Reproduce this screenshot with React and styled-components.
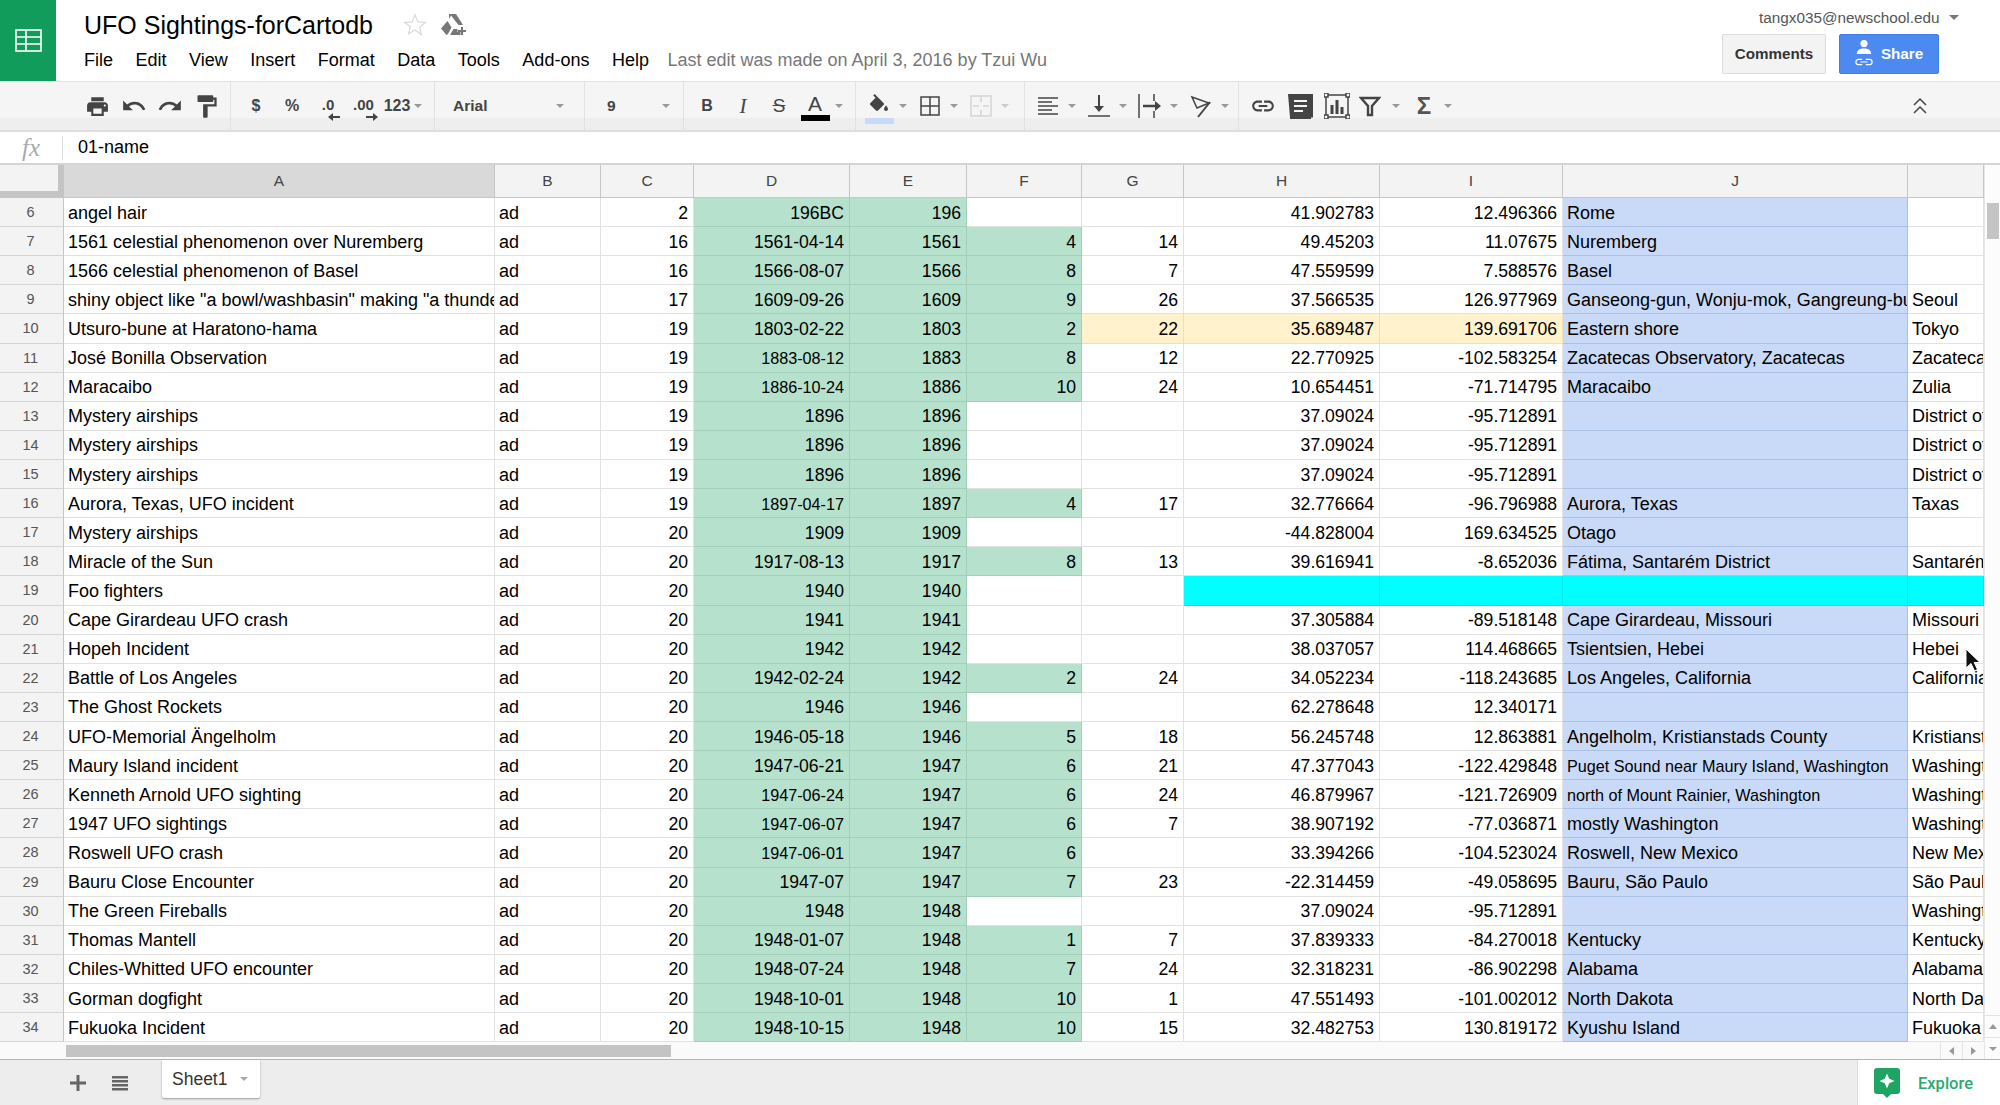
import React from 'react'
import styled, { createGlobalStyle } from 'styled-components'

const GlobalStyle = createGlobalStyle`
    html, body { margin: 0; padding: 0; background: #fff; }
    body { font-family: "Liberation Sans", Arial, sans-serif; color: #000; }
`

const COLUMNS = '431px 106px 93px 156px 117px 115px 102px 196px 183px 345px 76px'
const ROW_HEIGHT = 29.11

const Page = styled.div`
    position: relative;
    width: 2000px;
    height: 1105px;
    overflow: hidden;
    display: flex;
    flex-direction: column;
`

/* top header */
const Header = styled.header`
    display: flex;
    height: 81px;
    border-bottom: 1px solid #e2e2e2;
    flex-shrink: 0;
`
const Logo = styled.div`
    width: 56px;
    background: #129c5b;
    display: flex;
    align-items: center;
    justify-content: center;
`
const TitleBlock = styled.div`
    flex: 1;
    padding: 10px 0 0 28px;
`
const TitleRow = styled.div`
    display: flex;
    align-items: center;
    height: 30px;
`
const Title = styled.h1`
    margin: 0;
    font-weight: normal;
    font-size: 25px;
    line-height: 30px;
`
const StarIcon = styled.svg`
    width: 24px;
    height: 24px;
    margin-left: 30px;
    fill: #fff;
    stroke: #d8d8d8;
    stroke-width: 1.2;
`
const DriveIcon = styled.svg`
    width: 25px;
    height: 22px;
    margin-left: 14px;
    fill: #777;
`
const Menu = styled.nav`
    display: flex;
    align-items: center;
    gap: 22.5px;
    height: 30px;
    margin-top: 5px;
    font-size: 18px;
`
const LastEdit = styled.span`
    color: #777;
    font-size: 18px;
    margin-left: -4px;
`
const Account = styled.div`
    width: 278px;
    padding-top: 9px;
    box-sizing: border-box;
`
const Email = styled.div`
    display: flex;
    align-items: center;
    gap: 9px;
    padding-left: 37px;
    height: 17px;
    font-size: 15.3px;
    color: #555;
`
const Buttons = styled.div`
    display: flex;
    gap: 13px;
    margin-top: 8px;
`
const Comments = styled.button`
    width: 104px;
    height: 40px;
    box-sizing: border-box;
    background: #f3f3f3;
    border: 1px solid #dcdcdc;
    border-radius: 2px;
    font: bold 15.2px "Liberation Sans", Arial, sans-serif;
    color: #333;
    padding: 0 0 2px;
`
const Share = styled.button`
    width: 100px;
    height: 40px;
    background: #4d8af0;
    border: 1px solid #3f7ee6;
    box-sizing: border-box;
    border-radius: 2px;
    font: bold 15.2px "Liberation Sans", Arial, sans-serif;
    color: #fff;
    padding: 0 0 2px;
    display: flex;
    align-items: center;
    justify-content: center;
    gap: 8px;
`

/* toolbar */
const Toolbar = styled.div`
    display: flex;
    height: 48px;
    flex-shrink: 0;
    border-bottom: 2px solid #dedede;
    background: linear-gradient(#f5f5f5 0 76%, #eeeeee 76% 100%);
    color: #444;
`
const Group = styled.div`
    display: flex;
    align-items: center;
    box-sizing: border-box;
    width: ${p => p.$w}px;
    padding-left: ${p => p.$pad || 0}px;
    border-right: 1px solid #e2e2e2;
    justify-content: ${p => (p.$spread ? 'space-between' : 'flex-start')};
    padding-right: ${p => p.$padRight || 0}px;
`
const LastGroup = styled.div`
    display: flex;
    align-items: center;
    flex: 1;
    padding-left: 6px;
    padding-right: 62px;
`
const Tool = styled.div`
    position: relative;
    display: flex;
    align-items: center;
    justify-content: center;
    flex-shrink: 0;
    width: ${p => p.$w || 36}px;
    height: 36px;
    font-weight: bold;
    font-size: 16px;
    margin-left: ${p => (p.$end ? 'auto' : '0')};
`
const CaretBox = styled.div`
    display: flex;
    align-items: center;
    justify-content: center;
    flex-shrink: 0;
    width: ${p => p.$w || 12}px;
    margin-right: ${p => p.$mr || 0}px;
`
const Caret = styled.span`
    display: block;
    width: 0;
    height: 0;
    border-left: ${p => p.$size || 4}px solid transparent;
    border-right: ${p => p.$size || 4}px solid transparent;
    border-top: ${p => p.$size || 4}px solid ${p => p.$color || '#999'};
`
const Icon = styled.svg`
    width: ${p => p.$size || 24}px;
    height: ${p => p.$size || 24}px;
    fill: ${p => p.$fill || '#444'};
`
const LineIcon = styled.svg`
    width: ${p => p.$size || 24}px;
    height: ${p => p.$size || 24}px;
    fill: none;
    stroke: ${p => p.$stroke || '#444'};
    stroke-width: ${p => p.$weight || 1.5};
`
const DropText = styled.span`
    font-weight: bold;
    font-size: 15.5px;
`
const DecimalText = styled.span`
    font-size: 15px;
    margin-top: -3px;
`
const DecimalArrow = styled.svg`
    position: absolute;
    left: ${p => p.$left}px;
    top: 24px;
    width: 12px;
    height: 10px;
    fill: #444;
`
const ItalicI = styled.span`
    font-family: "Liberation Serif", serif;
    font-style: italic;
    font-weight: normal;
    font-size: 21px;
`
const Strike = styled.span`
    font-weight: normal;
    font-size: 19px;
    text-decoration: line-through;
`
const ColorA = styled.div`
    display: flex;
    flex-direction: column;
    align-items: center;
    font-weight: normal;
    font-size: 21px;
    line-height: 22px;
    margin-top: 2px;
`
const Swatch = styled.div`
    width: ${p => p.$w}px;
    height: 6px;
    background: ${p => p.$color};
`
const FillStack = styled.div`
    display: flex;
    flex-direction: column;
    align-items: center;
    margin-top: 5px;
`
const Sigma = styled.span`
    font-size: 24px;
    font-weight: bold;
    color: #555;
`

/* formula bar */
const FormulaBar = styled.div`
    display: flex;
    align-items: center;
    height: 31px;
    flex-shrink: 0;
    border-bottom: 2px solid #d4d4d4;
    font-size: 18px;
`
const FxBox = styled.div`
    width: 63px;
    box-sizing: border-box;
    height: 24px;
    display: flex;
    align-items: center;
    justify-content: center;
    border-right: 1px solid #ddd;
    font-family: "Liberation Serif", serif;
    font-style: italic;
    font-size: 25px;
    color: #aaa;
`
const FormulaText = styled.div`
    padding-left: 15px;
`

/* grid */
const Sheet = styled.div`
    display: flex;
    flex-shrink: 0;
`
const GridArea = styled.div`
    width: 1984px;
`
const ColHead = styled.div`
    display: flex;
    height: 33px;
    box-sizing: border-box;
    border-bottom: 1px solid #c6c6c6;
`
const Corner = styled.div`
    width: 64px;
    box-sizing: border-box;
    background: #f3f3f3;
    border-right: 6px solid #c4c4c4;
    border-bottom: 6px solid #c4c4c4;
    flex-shrink: 0;
`
const HeadCells = styled.div`
    flex: 1;
    display: grid;
    grid-template-columns: ${COLUMNS};
`
const HeadCell = styled.div`
    display: flex;
    align-items: center;
    justify-content: center;
    box-sizing: border-box;
    border-right: 1px solid #c6c6c6;
    font-size: 15.5px;
    color: #444;
    background: ${p => (p.$selected ? '#d9d9d9' : '#f3f3f3')};
`
const Row = styled.div`
    display: flex;
    height: ${ROW_HEIGHT}px;
`
const RowNumber = styled.div`
    width: 64px;
    flex-shrink: 0;
    box-sizing: border-box;
    display: flex;
    align-items: center;
    justify-content: center;
    padding-right: 2px;
    background: #f3f3f3;
    border-right: 1px solid #c6c6c6;
    border-bottom: 1px solid #d4d4d4;
    font-size: 14.5px;
    color: #555;
`
const Cells = styled.div`
    flex: 1;
    display: grid;
    grid-template-columns: ${COLUMNS};
`
const fills = {
    green: { bg: '#b6e1cd', line: '#a3cfba' },
    blue: { bg: '#c9daf8', line: '#a9bfe3' },
    yellow: { bg: '#fff2cc', line: '#efe0b4' },
    cyan: { bg: '#00ffff', line: '#00e8e8' },
}
const Cell = styled.div`
    box-sizing: border-box;
    display: flex;
    align-items: center;
    justify-content: ${p => (p.$right ? 'flex-end' : 'flex-start')};
    padding: 2px ${p => (p.$right ? '5px' : '0')} 0 ${p => (p.$right ? '0' : '4px')};
    overflow: hidden;
    white-space: nowrap;
    font-size: ${p => (p.$small ? '16.2px' : p.$right ? '17.6px' : '18px')};
    background: ${p => (p.$fill ? fills[p.$fill].bg : '#fff')};
    border-right: 1px solid ${p => (p.$fill ? fills[p.$fill].line : '#e2e2e2')};
    border-bottom: 1px solid ${p => (p.$fill ? fills[p.$fill].line : '#e2e2e2')};
`
const HScroll = styled.div`
    display: flex;
    height: 17px;
    flex-shrink: 0;
    background: #fafafa;
`
const HThumbTrack = styled.div`
    flex: 1;
    padding: 3px 0 2px 66px;
`
const HThumb = styled.div`
    width: 605px;
    height: 12px;
    background: #c4c4c4;
`
const ScrollArrow = styled.div`
    width: 22px;
    display: flex;
    align-items: center;
    justify-content: center;
    border-left: 1px solid #e4e4e4;
    box-sizing: border-box;
`
const SideArrow = styled.span`
    display: block;
    width: 0;
    height: 0;
    border-top: 4px solid transparent;
    border-bottom: 4px solid transparent;
    ${p => (p.$left ? 'border-right' : 'border-left')}: 5px solid #999;
`
const VScroll = styled.div`
    width: 16px;
    display: flex;
    flex-direction: column;
    background: #fcfcfc;
    border-left: 1px solid #e6e6e6;
    box-sizing: border-box;
`
const VThumb = styled.div`
    margin: 38px 1px 0 2px;
    height: 36px;
    background: #c4c4c4;
`
const VSpacer = styled.div`
    flex: 1;
`
const VArrow = styled.div`
    height: 22px;
    display: flex;
    align-items: center;
    justify-content: center;
    border-top: 1px solid #e4e4e4;
    box-sizing: border-box;
`
const UpArrow = styled.span`
    display: block;
    width: 0;
    height: 0;
    border-left: 4px solid transparent;
    border-right: 4px solid transparent;
    border-bottom: 5px solid #999;
`

/* bottom bar */
const BottomBar = styled.footer`
    flex: 1;
    display: flex;
    align-items: flex-start;
    background: #ededed;
    border-top: 1px solid #b4b4b4;
    box-sizing: border-box;
`
const BarButton = styled.div`
    display: flex;
    align-items: center;
    justify-content: center;
    width: 36px;
    height: 46px;
    margin-left: ${p => p.$ml || 0}px;
`
const SheetTab = styled.div`
    display: flex;
    align-items: center;
    gap: 13px;
    box-sizing: border-box;
    width: 98px;
    height: 38px;
    margin-left: 24px;
    padding: 0 0 0 10px;
    background: #fff;
    font-size: 17.5px;
    color: #333;
    border-radius: 0 0 2px 2px;
    box-shadow: 0 1px 2px rgba(0, 0, 0, 0.35);
`
const Explore = styled.div`
    margin-left: auto;
    width: 143px;
    height: 100%;
    box-sizing: border-box;
    padding-left: 16px;
    display: flex;
    align-items: center;
    gap: 18px;
    background: #fff;
    border-left: 1px solid #ddd;
    font-family: Roboto, sans-serif;
    font-weight: 500;
    font-size: 16.5px;
    color: #2fa873;
`
const CursorIcon = styled.svg`
    position: absolute;
    left: 1965px;
    top: 648px;
    width: 16px;
    height: 25px;
`

const rows = [
    [6, 'angel hair', 2, '196BC', 196, '', '', '41.902783', '12.496366', 'Rome', ''],
    [7, '1561 celestial phenomenon over Nuremberg', 16, '1561-04-14', 1561, 4, 14, '49.45203', '11.07675', 'Nuremberg', ''],
    [8, '1566 celestial phenomenon of Basel', 16, '1566-08-07', 1566, 8, 7, '47.559599', '7.588576', 'Basel', ''],
    [9, 'shiny object like "a bowl/washbasin" making "a thunderous noise"', 17, '1609-09-26', 1609, 9, 26, '37.566535', '126.977969', 'Ganseong-gun, Wonju-mok, Gangreung-bu', 'Seoul'],
    [10, 'Utsuro-bune at Haratono-hama', 19, '1803-02-22', 1803, 2, 22, '35.689487', '139.691706', 'Eastern shore', 'Tokyo'],
    [11, 'José Bonilla Observation', 19, '1883-08-12', 1883, 8, 12, '22.770925', '-102.583254', 'Zacatecas Observatory, Zacatecas', 'Zacatecas'],
    [12, 'Maracaibo', 19, '1886-10-24', 1886, 10, 24, '10.654451', '-71.714795', 'Maracaibo', 'Zulia'],
    [13, 'Mystery airships', 19, '1896', 1896, '', '', '37.09024', '-95.712891', '', 'District of Columbia'],
    [14, 'Mystery airships', 19, '1896', 1896, '', '', '37.09024', '-95.712891', '', 'District of Columbia'],
    [15, 'Mystery airships', 19, '1896', 1896, '', '', '37.09024', '-95.712891', '', 'District of Columbia'],
    [16, 'Aurora, Texas, UFO incident', 19, '1897-04-17', 1897, 4, 17, '32.776664', '-96.796988', 'Aurora, Texas', 'Taxas'],
    [17, 'Mystery airships', 20, '1909', 1909, '', '', '-44.828004', '169.634525', 'Otago', ''],
    [18, 'Miracle of the Sun', 20, '1917-08-13', 1917, 8, 13, '39.616941', '-8.652036', 'Fátima, Santarém District', 'Santarém'],
    [19, 'Foo fighters', 20, '1940', 1940, '', '', '', '', '', ''],
    [20, 'Cape Girardeau UFO crash', 20, '1941', 1941, '', '', '37.305884', '-89.518148', 'Cape Girardeau, Missouri', 'Missouri'],
    [21, 'Hopeh Incident', 20, '1942', 1942, '', '', '38.037057', '114.468665', 'Tsientsien, Hebei', 'Hebei'],
    [22, 'Battle of Los Angeles', 20, '1942-02-24', 1942, 2, 24, '34.052234', '-118.243685', 'Los Angeles, California', 'California'],
    [23, 'The Ghost Rockets', 20, '1946', 1946, '', '', '62.278648', '12.340171', '', ''],
    [24, 'UFO-Memorial Ängelholm', 20, '1946-05-18', 1946, 5, 18, '56.245748', '12.863881', 'Angelholm, Kristianstads County', 'Kristianstad'],
    [25, 'Maury Island incident', 20, '1947-06-21', 1947, 6, 21, '47.377043', '-122.429848', 'Puget Sound near Maury Island, Washington', 'Washington'],
    [26, 'Kenneth Arnold UFO sighting', 20, '1947-06-24', 1947, 6, 24, '46.879967', '-121.726909', 'north of Mount Rainier, Washington', 'Washington'],
    [27, '1947 UFO sightings', 20, '1947-06-07', 1947, 6, 7, '38.907192', '-77.036871', 'mostly Washington', 'Washington'],
    [28, 'Roswell UFO crash', 20, '1947-06-01', 1947, 6, '', '33.394266', '-104.523024', 'Roswell, New Mexico', 'New Mexico'],
    [29, 'Bauru Close Encounter', 20, '1947-07', 1947, 7, 23, '-22.314459', '-49.058695', 'Bauru, São Paulo', 'São Paulo'],
    [30, 'The Green Fireballs', 20, '1948', 1948, '', '', '37.09024', '-95.712891', '', 'Washington'],
    [31, 'Thomas Mantell', 20, '1948-01-07', 1948, 1, 7, '37.839333', '-84.270018', 'Kentucky', 'Kentucky'],
    [32, 'Chiles-Whitted UFO encounter', 20, '1948-07-24', 1948, 7, 24, '32.318231', '-86.902298', 'Alabama', 'Alabama'],
    [33, 'Gorman dogfight', 20, '1948-10-01', 1948, 10, 1, '47.551493', '-101.002012', 'North Dakota', 'North Dakota'],
    [34, 'Fukuoka Incident', 20, '1948-10-15', 1948, 10, 15, '32.482753', '130.819172', 'Kyushu Island', 'Fukuoka'],
]

// these rows had their long values shrunk in the sheet
const smallDates = [11, 12, 16, 26, 27, 28]
const smallPlaces = [25, 26]

function SheetRow({ data }) {
    const [num, name, century, date, year, month, day, lat, lng, place, region] = data
    const isCyan = num === 19
    const isYellow = num === 10
    return (
        <Row>
            <RowNumber>{num}</RowNumber>
            <Cells>
                <Cell>{name}</Cell>
                <Cell>ad</Cell>
                <Cell $right>{century}</Cell>
                <Cell $right $fill="green" $small={smallDates.includes(num)}>{date}</Cell>
                <Cell $right $fill="green">{year}</Cell>
                <Cell $right $fill={month !== '' ? 'green' : undefined}>{month}</Cell>
                <Cell $right $fill={isYellow ? 'yellow' : undefined}>{day}</Cell>
                <Cell $right $fill={isCyan ? 'cyan' : isYellow ? 'yellow' : undefined}>{lat}</Cell>
                <Cell $right $fill={isCyan ? 'cyan' : isYellow ? 'yellow' : undefined}>{lng}</Cell>
                <Cell $fill={isCyan ? 'cyan' : 'blue'} $small={smallPlaces.includes(num)}>{place}</Cell>
                <Cell $fill={isCyan ? 'cyan' : undefined}>{region}</Cell>
            </Cells>
        </Row>
    )
}

function ToolbarRow() {
    return (
        <Toolbar>
            <Group $w={231} $pad={79}>
                <Tool $w={36.5}><Icon $size={25} viewBox="0 0 24 24"><path d="M19 8H5c-1.66 0-3 1.34-3 3v6h4v4h12v-4h4v-6c0-1.66-1.34-3-3-3zm-3 11H8v-5h8v5zm3-7c-.55 0-1-.45-1-1s.45-1 1-1 1 .45 1 1-.45 1-1 1zm-1-9H6v4h12V3z" /></Icon></Tool>
                <Tool $w={36.5}><Icon $size={26} viewBox="0 0 24 24"><path d="M12.5 8c-2.65 0-5.05.99-6.9 2.6L2 7v9h9l-3.62-3.62c1.39-1.16 3.16-1.88 5.12-1.88 3.54 0 6.55 2.31 7.6 5.5l2.37-.78C21.08 11.03 17.15 8 12.5 8z" /></Icon></Tool>
                <Tool $w={36.5}><Icon $size={26} viewBox="0 0 24 24"><path d="M18.4 10.6C16.55 8.99 14.15 8 11.5 8c-4.65 0-8.58 3.03-9.96 7.22L3.9 16c1.05-3.19 4.05-5.5 7.6-5.5 1.95 0 3.73.72 5.12 1.88L13 16h9V7l-3.6 3.6z" /></Icon></Tool>
                <Tool $w={36.5}><Icon $size={27} viewBox="0 0 24 24"><path d="M18 4V3c0-.55-.45-1-1-1H5c-.55 0-1 .45-1 1v4c0 .55.45 1 1 1h12c.55 0 1-.45 1-1V6h1v4H9v11c0 .55.45 1 1 1h2c.55 0 1-.45 1-1v-9h8V4h-3z" /></Icon></Tool>
            </Group>
            <Group $w={204} $pad={7}>
                <Tool>$</Tool>
                <Tool>%</Tool>
                <Tool>
                    <DecimalText>.0</DecimalText>
                    <DecimalArrow $left={18} viewBox="0 0 12 10"><path d="M0 5l5-4v3h7v2H5v3z" /></DecimalArrow>
                </Tool>
                <Tool $w={35}>
                    <DecimalText>.00</DecimalText>
                    <DecimalArrow $left={20} viewBox="0 0 12 10"><path d="M12 5L7 1v3H0v2h7v3z" /></DecimalArrow>
                </Tool>
                <Tool $w={32}>123</Tool>
                <CaretBox $w={10}><Caret /></CaretBox>
            </Group>
            <Group $w={150} $pad={18} $padRight={20} $spread>
                <DropText>Arial</DropText>
                <Caret />
            </Group>
            <Group $w={99} $pad={22} $padRight={13} $spread>
                <DropText>9</DropText>
                <Caret />
            </Group>
            <Group $w={172} $pad={5}>
                <Tool>B</Tool>
                <Tool><ItalicI>I</ItalicI></Tool>
                <Tool><Strike>S</Strike></Tool>
                <Tool>
                    <ColorA>A<Swatch $w={29} $color="#000" /></ColorA>
                </Tool>
                <CaretBox><Caret /></CaretBox>
            </Group>
            <Group $w={169} $pad={5}>
                <Tool>
                    <FillStack>
                        <Icon $size={24} viewBox="0 0 24 24"><path d="M16.56 8.94L7.62 0 6.21 1.41l2.38 2.38-5.15 5.15c-.59.59-.59 1.54 0 2.12l5.5 5.5c.29.29.68.44 1.06.44s.77-.15 1.06-.44l5.5-5.5c.59-.58.59-1.53 0-2.12zM19 11.5s-2 2.17-2 3.5c0 1.1.9 2 2 2s2-.9 2-2c0-1.33-2-3.5-2-3.5z" /></Icon>
                        <Swatch $w={29} $color="#c9daf8" />
                    </FillStack>
                </Tool>
                <CaretBox $mr={3}><Caret /></CaretBox>
                <Tool><LineIcon $size={22} viewBox="0 0 22 22"><rect x="2" y="2" width="18" height="18" /><path d="M11 2v18M2 11h18" /></LineIcon></Tool>
                <CaretBox $mr={3}><Caret /></CaretBox>
                <Tool><LineIcon $size={24} $stroke="#d4d4d4" viewBox="0 0 24 24"><rect x="2" y="2" width="20" height="20" /><path d="M12 2v6M12 16v6M4 12h6M14 12h6" /></LineIcon></Tool>
                <CaretBox><Caret $color="#ccc" /></CaretBox>
            </Group>
            <Group $w={214} $pad={5}>
                <Tool><LineIcon $size={22} viewBox="0 0 22 22"><path d="M1 3h20M1 7h14M1 11h20M1 15h14M1 19h20" /></LineIcon></Tool>
                <CaretBox $mr={3}><Caret /></CaretBox>
                <Tool><LineIcon $size={24} viewBox="0 0 24 24"><path d="M12 1v15" strokeWidth="2" /><path d="M7 12l5 6 5-6z" fill="#444" stroke="none" /><path d="M1 22h22" /></LineIcon></Tool>
                <CaretBox $mr={3}><Caret /></CaretBox>
                <Tool><LineIcon $size={26} viewBox="0 0 26 26"><path d="M2 1v24" /><path d="M6 13h15" strokeWidth="2.5" /><path d="M18 8l6 5-6 5z" fill="#444" stroke="none" /><path d="M17 1v7M17 18v7" /></LineIcon></Tool>
                <CaretBox $mr={3}><Caret /></CaretBox>
                <Tool><LineIcon $size={24} viewBox="0 0 24 24"><path d="M3 3l17 6-12 5z" /><path d="M21 8L9 23" strokeWidth="2" /></LineIcon></Tool>
                <CaretBox><Caret /></CaretBox>
            </Group>
            <LastGroup>
                <Tool><Icon $size={26} viewBox="0 0 24 24"><path d="M3.9 12c0-1.71 1.39-3.1 3.1-3.1h4V7H7c-2.76 0-5 2.24-5 5s2.24 5 5 5h4v-1.9H7c-1.71 0-3.1-1.39-3.1-3.1zM8 13h8v-2H8v2zm9-6h-4v1.9h4c1.71 0 3.1 1.39 3.1 3.1s-1.39 3.1-3.1 3.1h-4V17h4c2.76 0 5-2.24 5-5s-2.24-5-5-5z" /></Icon></Tool>
                <Tool $w={38}><Icon $size={25} viewBox="0 0 25 25"><path fillRule="evenodd" d="M0 0h25v23.5h-2V25H2v-1.5H2L0 0zM6 6h13v2H6zM6 11h13v2H6zM6 16h9v2H6z" /></Icon></Tool>
                <Tool>
                    <LineIcon $size={26} viewBox="0 0 26 26">
                        <rect x="2" y="2" width="22" height="22" />
                        <path d="M8 21v-9M13 21V7M18 21v-7" strokeWidth="3" />
                        <path d="M0 0h4v4H0zM22 0h4v4h-4zM0 22h4v4H0zM22 22h4v4h-4z" fill="#f5f5f5" />
                    </LineIcon>
                </Tool>
                <Tool $w={30}><LineIcon $size={22} $weight={2.4} viewBox="0 0 22 22"><path d="M2 3h18l-7 8v9h-4v-9z" /></LineIcon></Tool>
                <CaretBox $w={22}><Caret /></CaretBox>
                <Tool $w={34}><Sigma>Σ</Sigma></Tool>
                <CaretBox $w={14}><Caret /></CaretBox>
                <Tool $end><LineIcon $size={18} viewBox="0 0 18 18"><path d="M3 8l6-6 6 6M3 16l6-6 6 6" /></LineIcon></Tool>
            </LastGroup>
        </Toolbar>
    )
}

export default function App() {
    return (
        <Page>
            <GlobalStyle />
            <Header>
                <Logo>
                    <LineIcon $size={27} $stroke="#fff" $weight={1.6} viewBox="0 0 27 23">
                        <rect x="1" y="1" width="25" height="21" />
                        <path d="M1 8h25M1 15h25M11 1v21" />
                    </LineIcon>
                </Logo>
                <TitleBlock>
                    <TitleRow>
                        <Title>UFO Sightings-forCartodb</Title>
                        <StarIcon viewBox="0 0 24 24"><path d="M12 2l2.9 6.9 7.4.6-5.6 4.9 1.7 7.3L12 17l-6.4 3.7 1.7-7.3L1.7 9.5l7.4-.6z" /></StarIcon>
                        <DriveIcon viewBox="0 0 25 22"><path d="M8 0h7l7 11h-4.500L10 1.500 8 5zM6.500 7l4 6.500L7 20l-1.500 1L0 14.500zM9 21l3.500-6h4v3h3v3z" /><path d="M20 13h2v3h3v2h-3v3h-2v-3h-3v-2h3z" /></DriveIcon>
                    </TitleRow>
                    <Menu>
                        <span>File</span>
                        <span>Edit</span>
                        <span>View</span>
                        <span>Insert</span>
                        <span>Format</span>
                        <span>Data</span>
                        <span>Tools</span>
                        <span>Add-ons</span>
                        <span>Help</span>
                        <LastEdit>Last edit was made on April 3, 2016 by Tzui Wu</LastEdit>
                    </Menu>
                </TitleBlock>
                <Account>
                    <Email>tangx035@newschool.edu <Caret $size={5} $color="#777" /></Email>
                    <Buttons>
                        <Comments>Comments</Comments>
                        <Share>
                            <svg width="18" height="28" viewBox="0 0 20 30" fill="#fff">
                                <circle cx="10" cy="4.500" r="4" />
                                <path d="M2 16c0-4 3.500-6 8-6s8 2 8 6z" />
                                <path d="M8 22H4a3 3 0 0 0 0 6h4M12 22h4a3 3 0 0 1 0 6h-4M6 25h8" fill="none" stroke="#fff" strokeWidth="1.300" />
                            </svg>
                            Share
                        </Share>
                    </Buttons>
                </Account>
            </Header>
            <ToolbarRow />
            <FormulaBar>
                <FxBox>fx</FxBox>
                <FormulaText>01-name</FormulaText>
            </FormulaBar>
            <Sheet>
                <GridArea>
                    <ColHead>
                        <Corner />
                        <HeadCells>
                            {'ABCDEFGHIJ'.split('').map(letter => (
                                <HeadCell key={letter} $selected={letter === 'A'}>{letter}</HeadCell>
                            ))}
                            <HeadCell />
                        </HeadCells>
                    </ColHead>
                    {rows.map(row => <SheetRow key={row[0]} data={row} />)}
                    <HScroll>
                        <HThumbTrack><HThumb /></HThumbTrack>
                        <ScrollArrow><SideArrow $left /></ScrollArrow>
                        <ScrollArrow><SideArrow /></ScrollArrow>
                    </HScroll>
                </GridArea>
                <VScroll>
                    <VThumb />
                    <VSpacer />
                    <VArrow><UpArrow /></VArrow>
                    <VArrow><Caret /></VArrow>
                </VScroll>
            </Sheet>
            <BottomBar>
                <BarButton $ml={60}>
                    <Icon $size={20} $fill="#666" viewBox="0 0 20 20"><path d="M8.500 2h3v6.500H18v3h-6.500V18h-3v-6.500H2v-3h6.500z" /></Icon>
                </BarButton>
                <BarButton $ml={6}>
                    <Icon $size={20} $fill="#666" viewBox="0 0 20 20"><path d="M2 3h16v2.400H2zM2 7h16v2.400H2zM2 11h16v2.400H2zM2 15h16v2.400H2z" /></Icon>
                </BarButton>
                <SheetTab>Sheet1 <Caret $size={4.5} $color="#aaa" /></SheetTab>
                <Explore>
                    <svg width="26" height="30" viewBox="0 0 26 30">
                        <path d="M3 0h20a3 3 0 0 1 3 3v20a3 3 0 0 1-3 3h-6l-4 4-4-4H3a3 3 0 0 1-3-3V3a3 3 0 0 1 3-3z" fill="#1fa463" />
                        <path d="M13 5.500l2.200 5.300 5.300 2.200-5.300 2.200L13 20.500l-2.200-5.300L5.500 13l5.300-2.200z" fill="#fff" />
                    </svg>
                    Explore
                </Explore>
            </BottomBar>
            <CursorIcon viewBox="0 0 16 25"><path d="M1 1v19l5-4.500L9.500 23l3-1.500-3.300-7H15z" fill="#111" stroke="#fff" strokeWidth="1" /></CursorIcon>
        </Page>
    )
}
